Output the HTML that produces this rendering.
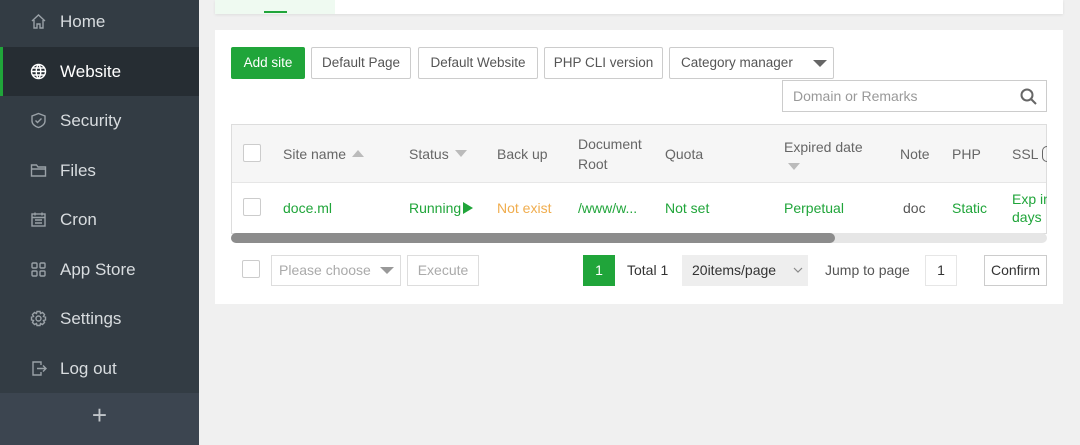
<!DOCTYPE html>
<html><head><style>
*{box-sizing:border-box;margin:0;padding:0}
body{width:1080px;height:445px;overflow:hidden;background:#f0f0f0;font-family:"Liberation Sans",sans-serif;font-size:14px;color:#555;position:relative}
.a{position:absolute}
#sb{left:0;top:0;width:199px;height:445px;background:#333c44}
.it{position:absolute;left:0;width:199px;height:49px;color:#d8dcdf;font-size:17px;line-height:49px;padding-left:60px}
.it svg{position:absolute;left:30px;top:16px;width:17px;height:17px;fill:none;stroke:#9aa1a7;stroke-width:1.4}
.act{background:#262d33;color:#fff;border-left:3px solid #20a53a}
.act svg{stroke:#fff}
.btn{position:absolute;top:47px;height:32px;border:1px solid #ccc;border-radius:2px;background:#fff;color:#555;line-height:30px;text-align:center;font-size:13.5px}
.th{position:absolute;top:124px;height:59px;display:flex;align-items:center;color:#666;line-height:20px}
.td{position:absolute;top:183px;height:50px;display:flex;align-items:center;color:#20a53a;line-height:18px}
.cb{position:absolute;width:18px;height:18px;border:1px solid #ccc;background:#fff;border-radius:2px}
.tri{display:inline-block;width:0;height:0;border-left:6px solid transparent;border-right:6px solid transparent;margin-left:6px}
</style></head><body>
<div id="sb" class="a">
<div class="it" style="top:-3px"><svg viewBox="0 0 17 17"><path d="M2 8L8.5 2 15 8M4 7v8h3v-4h3v4h3V7"/></svg>Home</div>
<div class="it act" style="top:47px;padding-left:57px"><svg viewBox="0 0 17 17" style="left:27px"><circle cx="8.5" cy="8.5" r="7"/><path d="M1.5 8.5h14M8.5 1.5c-3 3-3 11 0 14M8.5 1.5c3 3 3 11 0 14M2.5 5h12M2.5 12h12"/></svg>Website</div>
<div class="it" style="top:96px"><svg viewBox="0 0 17 17"><path d="M8.5 1.5L15 4v5c0 3-3 5.5-6.5 6.5C5 14.5 2 12 2 9V4z M5.5 8.5l2 2 4-4"/></svg>Security</div>
<div class="it" style="top:146px"><svg viewBox="0 0 17 17"><path d="M1.5 3h5l1.5 2h7.5v9h-14z M1.5 7h14"/></svg>Files</div>
<div class="it" style="top:195px"><svg viewBox="0 0 17 17"><rect x="2" y="3" width="13" height="12"/><path d="M5 1.5v3M12 1.5v3M2 6.5h13M5 9h7M5 12h7"/></svg>Cron</div>
<div class="it" style="top:245px"><svg viewBox="0 0 17 17"><rect x="2" y="2" width="5" height="5" rx="1"/><rect x="10" y="2" width="5" height="5" rx="1"/><rect x="2" y="10" width="5" height="5" rx="1"/><rect x="10" y="10" width="5" height="5" rx="1"/></svg>App Store</div>
<div class="it" style="top:294px"><svg viewBox="0 0 17 17"><circle cx="8.5" cy="8.5" r="2.5"/><path d="M7 1.5h3l.5 2 2-1 2 2-1 2 2 .5v3l-2 .5 1 2-2 2-2-1-.5 2H7l-.5-2-2 1-2-2 1-2-2-.5V7l2-.5-1-2 2-2 2 1z"/></svg>Settings</div>
<div class="it" style="top:344px"><svg viewBox="0 0 17 17"><path d="M11 5V2H3v13h8v-3M7 8.5h9M13 5.5l3 3-3 3"/></svg>Log out</div>
<div class="a" style="left:0;top:393px;width:199px;height:52px;background:#3c4550;color:#c0c5c9;font-size:26px;text-align:center;line-height:44px">+</div>
</div>
<div class="a" style="left:215px;top:0;width:848px;height:14px;background:#fff;box-shadow:0 1px 3px rgba(0,0,0,.08)"></div>
<div class="a" style="left:215px;top:0;width:120px;height:14px;background:#effaf1"></div>
<div class="a" style="left:264px;top:11px;width:23px;height:2px;background:#20a53a"></div>
<div class="a" style="left:215px;top:30px;width:848px;height:274px;background:#fff"></div>
<div class="btn" style="left:231px;width:74px;background:#20a53a;border-color:#20a53a;color:#fff">Add site</div>
<div class="btn" style="left:311px;width:100px">Default Page</div>
<div class="btn" style="left:418px;width:120px">Default Website</div>
<div class="btn" style="left:544px;width:119px">PHP CLI version</div>
<div class="btn" style="left:669px;width:165px;text-align:left;padding-left:11px">Category manager<span class="a" style="right:6px;top:12px;border-left:7px solid transparent;border-right:7px solid transparent;border-top:7px solid #666"></span></div>
<div class="a" style="left:782px;top:80px;width:265px;height:32px;border:1px solid #ccc;color:#999;line-height:30px;padding-left:10px">Domain or Remarks
<svg class="a" style="right:9px;top:7px" width="17" height="17" viewBox="0 0 17 17" fill="none" stroke="#666" stroke-width="2"><circle cx="7" cy="7" r="5.5"/><path d="M11 11l5 5"/></svg></div>
<div class="a" style="left:231px;top:124px;width:816px;height:110px;border:1px solid #ddd;overflow:hidden">
<div class="a" style="left:0;top:0;width:816px;height:58px;background:#f6f6f6;border-bottom:1px solid #e6e6e6"></div></div>
<div class="cb" style="left:243px;top:144px"></div>
<div class="th" style="left:283px">Site name<span class="tri" style="border-bottom:7px solid #bbb"></span></div>
<div class="th" style="left:409px">Status<span class="tri" style="border-top:7px solid #bbb"></span></div>
<div class="th" style="left:497px">Back up</div>
<div class="th" style="left:578px">Document<br>Root</div>
<div class="th" style="left:665px">Quota</div>
<div class="th" style="left:784px;flex-direction:column;align-items:flex-start;justify-content:center"><span>Expired date</span><span class="tri" style="border-top:7px solid #bbb;margin:6px 0 0 4px"></span></div>
<div class="th" style="left:900px">Note</div>
<div class="th" style="left:952px">PHP</div>
<div class="th" style="left:1012px;width:35px;overflow:hidden;white-space:nowrap">SSL<span style="display:inline-block;width:14px;height:16px;border:1.5px solid #666;border-right:none;border-radius:8px 0 0 8px;margin-left:4px"></span></div>
<div class="cb" style="left:243px;top:198px"></div>
<div class="td" style="left:283px">doce.ml</div>
<div class="td" style="left:409px">Running<span style="border-top:6px solid transparent;border-bottom:6px solid transparent;border-left:10px solid #20a53a;margin-left:2px"></span></div>
<div class="td" style="left:497px;color:#f0ad4e">Not exist</div>
<div class="td" style="left:578px">/www/w...</div>
<div class="td" style="left:665px">Not set</div>
<div class="td" style="left:784px">Perpetual</div>
<div class="td" style="left:903px;color:#555">doc</div>
<div class="td" style="left:952px">Static</div>
<div class="td" style="left:1012px;width:35px;overflow:hidden;white-space:nowrap">Exp in<br>days</div>
<div class="a" style="left:231px;top:233px;width:816px;height:10px;background:#e6e6e6;border-radius:5px"></div>
<div class="a" style="left:231px;top:233px;width:604px;height:10px;background:#8c8c8c;border-radius:5px"></div>
<div class="cb" style="left:242px;top:260px"></div>
<div class="a" style="left:271px;top:255px;width:130px;height:31px;border:1px solid #ddd;color:#aaa;line-height:29px;padding-left:7px">Please choose<span class="a" style="right:6px;top:11px;border-left:7px solid transparent;border-right:7px solid transparent;border-top:7px solid #999"></span></div>
<div class="a" style="left:407px;top:255px;width:72px;height:31px;border:1px solid #ddd;color:#aaa;line-height:29px;text-align:center">Execute</div>
<div class="a" style="left:583px;top:255px;width:32px;height:31px;background:#20a53a;color:#fff;line-height:31px;text-align:center">1</div>
<div class="a" style="left:627px;top:255px;height:31px;color:#333;line-height:31px">Total 1</div>
<div class="a" style="left:682px;top:255px;width:126px;height:31px;background:#eee;color:#333;line-height:31px;padding-left:10px">20items/page<svg class="a" style="right:5px;top:12px" width="10" height="7" viewBox="0 0 10 7" fill="none" stroke="#888" stroke-width="1.2"><path d="M1 1l4 4 4-4"/></svg></div>
<div class="a" style="left:825px;top:255px;height:31px;color:#555;line-height:31px">Jump to page</div>
<div class="a" style="left:925px;top:255px;width:32px;height:31px;border:1px solid #e6e6e6;color:#333;line-height:29px;text-align:center">1</div>
<div class="a" style="left:984px;top:255px;width:63px;height:31px;border:1px solid #ccc;color:#333;line-height:29px;text-align:center">Confirm</div>
</body></html>
